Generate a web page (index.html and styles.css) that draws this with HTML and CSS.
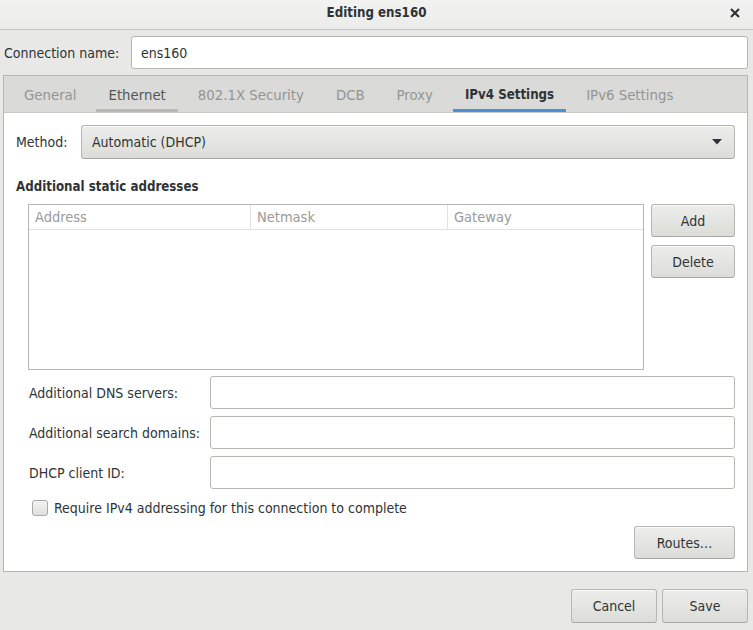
FILE: index.html
```html
<!DOCTYPE html>
<html>
<head>
<meta charset="utf-8">
<link rel="stylesheet" href="styles.css">
</head>
<body>
<div class="window">
  <div class="titlebar">
    <span class="title">Editing ens160</span>
    <svg class="close" width="10" height="10" viewBox="0 0 10 10"><path d="M1 1L9 9M9 1L1 9" stroke="#2e3436" stroke-width="2.2" stroke-linecap="butt"/></svg>
  </div>
  <div class="body">
    <div class="conn-row">
      <span class="conn-label">Connection name:</span>
      <div class="entry conn-entry">ens160</div>
    </div>
    <div class="notebook">
      <div class="tabs">
        <div class="tab">General</div>
        <div class="tab hover">Ethernet</div>
        <div class="tab">802.1X Security</div>
        <div class="tab">DCB</div>
        <div class="tab">Proxy</div>
        <div class="tab active">IPv4 Settings</div>
        <div class="tab">IPv6 Settings</div>
      </div>
      <div class="page">
        <div class="method-row">
          <span class="method-label">Method:</span>
          <div class="combo">
            <span>Automatic (DHCP)</span>
            <svg width="10" height="6" viewBox="0 0 10 6"><path d="M0 0H10L5 5.5Z" fill="#2e3436"/></svg>
          </div>
        </div>
        <div class="heading">Additional static addresses</div>
        <div class="addr-row">
          <div class="tree">
            <div class="tree-head">
              <div class="col c1">Address</div>
              <div class="col c2">Netmask</div>
              <div class="col c3">Gateway</div>
            </div>
          </div>
          <div class="side-buttons">
            <div class="button">Add</div>
            <div class="button">Delete</div>
          </div>
        </div>
        <div class="fields">
          <div class="field-row"><span class="field-label">Additional DNS servers:</span><div class="entry field-entry"></div></div>
          <div class="field-row"><span class="field-label">Additional search domains:</span><div class="entry field-entry"></div></div>
          <div class="field-row"><span class="field-label">DHCP client ID:</span><div class="entry field-entry"></div></div>
        </div>
        <div class="check-row">
          <span class="checkbox"></span>
          <span>Require IPv4 addressing for this connection to complete</span>
        </div>
        <div class="routes-row">
          <div class="button routes">Routes…</div>
        </div>
      </div>
    </div>
    <div class="actions">
      <div class="button action">Cancel</div>
      <div class="button action">Save</div>
    </div>
  </div>
</div>
</body>
</html>
```

FILE: styles.css
```css
* { box-sizing: border-box; }
html, body { margin: 0; padding: 0; }
body {
  background: #e8e8e7;
  font-family: "DejaVu Sans Condensed", "DejaVu Sans", sans-serif;
  font-size: 14px;
  color: #2e3436;
}
.window {
  width: 753px;
  height: 630px;
  display: flex;
  flex-direction: column;
}
.titlebar {
  height: 30px;
  background: linear-gradient(#f2f2f1, #ececeb);
  border-bottom: 1px solid #c6c6c3;
  display: flex;
  align-items: center;
  justify-content: center;
  position: relative;
  flex: none;
}
.title {
  font-weight: bold;
  font-size: 13.2px;
  color: #2e3436;
  margin-top: -5px;
}
.close {
  position: absolute;
  right: 13px;
  top: 8px;
}
.body {
  padding: 6px 5px 0 3px;
  display: flex;
  flex-direction: column;
}
.conn-row {
  display: flex;
  align-items: center;
  height: 33px;
}
.conn-label {
  width: 128px;
  padding-left: 1px;
}
.entry {
  background: #fff;
  border: 1px solid #b6b6b3;
  border-radius: 3px;
  display: flex;
  align-items: center;
}
.conn-entry {
  flex: 1;
  height: 33px;
  padding-left: 9px;
}
.notebook {
  margin-top: 6px;
  border: 1px solid #b6b6b3;
  background: #fff;
  height: 497px;
  display: flex;
  flex-direction: column;
}
.tabs {
  display: flex;
  background: #dadad8;
  height: 37px;
  padding-left: 8px;
  border-bottom: 1px solid #c8c8c5;
  flex: none;
  gap: 8px;
}
.tab {
  padding: 4px 12px 0;
  height: 36px;
  display: flex;
  align-items: center;
  color: #939594;
  border-bottom: 3px solid transparent;
  font-size: 14.8px;
}
.tab.hover {
  color: #555756;
  border-bottom-color: #b9b9b6;
}
.tab.active {
  color: #2e3436;
  font-weight: bold;
  font-size: 13.2px;
  border-bottom-color: #4a90d9;
}
.page {
  flex: 1;
  padding: 12px 12px 12px 12px;
  display: flex;
  flex-direction: column;
}
.method-row {
  display: flex;
  align-items: center;
  height: 34px;
}
.method-label {
  width: 65px;
}
.button, .combo {
  background: linear-gradient(#ededeb, #dcdcd9);
  border: 1px solid #b6b6b3;
  border-bottom-color: #a7a7a4;
  border-radius: 3px;
  box-shadow: inset 0 1px #fafaf9;
}
.combo {
  flex: 1;
  height: 34px;
  display: flex;
  align-items: center;
  justify-content: space-between;
  padding: 0 12px 0 10px;
}
.heading {
  font-weight: bold;
  font-size: 13.2px;
  margin-top: 20px;
  height: 19px;
}
.addr-row {
  display: flex;
  margin-top: 6px;
  padding-left: 12px;
}
.tree {
  width: 616px;
  height: 166px;
  border: 1px solid #b6b6b3;
}
.tree-head {
  display: flex;
  height: 25px;
  border-bottom: 1px solid #e1e1df;
}
.col {
  color: #9a9a9a;
  padding-left: 6px;
  display: flex;
  align-items: center;
  font-size: 14.5px;
}
.c1 { width: 222px; border-right: 1px solid #e1e1df; }
.c2 { width: 197px; border-right: 1px solid #e1e1df; }
.c3 { flex: 1; }
.side-buttons {
  margin-left: 7px;
  display: flex;
  flex-direction: column;
  gap: 8px;
}
.button {
  width: 84px;
  height: 33px;
  display: flex;
  align-items: center;
  justify-content: center;
}
.fields {
  margin-top: 6px;
  padding-left: 13px;
  display: flex;
  flex-direction: column;
  gap: 7px;
}
.field-row {
  display: flex;
  align-items: center;
}
.field-label { width: 181px; }
.field-entry {
  flex: 1;
  height: 33px;
}
.check-row {
  display: flex;
  align-items: center;
  margin-top: 10px;
  padding-left: 16px;
  height: 17px;
}
.checkbox {
  width: 16px;
  height: 16px;
  border: 1px solid #a9a9a6;
  border-radius: 3px;
  background: linear-gradient(#f4f4f3, #e0e0de);
  margin-right: 6px;
}
.routes-row {
  display: flex;
  justify-content: flex-end;
  margin-top: 10px;
}
.routes { width: 101px; }
.actions {
  display: flex;
  justify-content: flex-end;
  gap: 5px;
  margin-top: 17px;
}
.action { width: 86px; height: 34px; }
```
